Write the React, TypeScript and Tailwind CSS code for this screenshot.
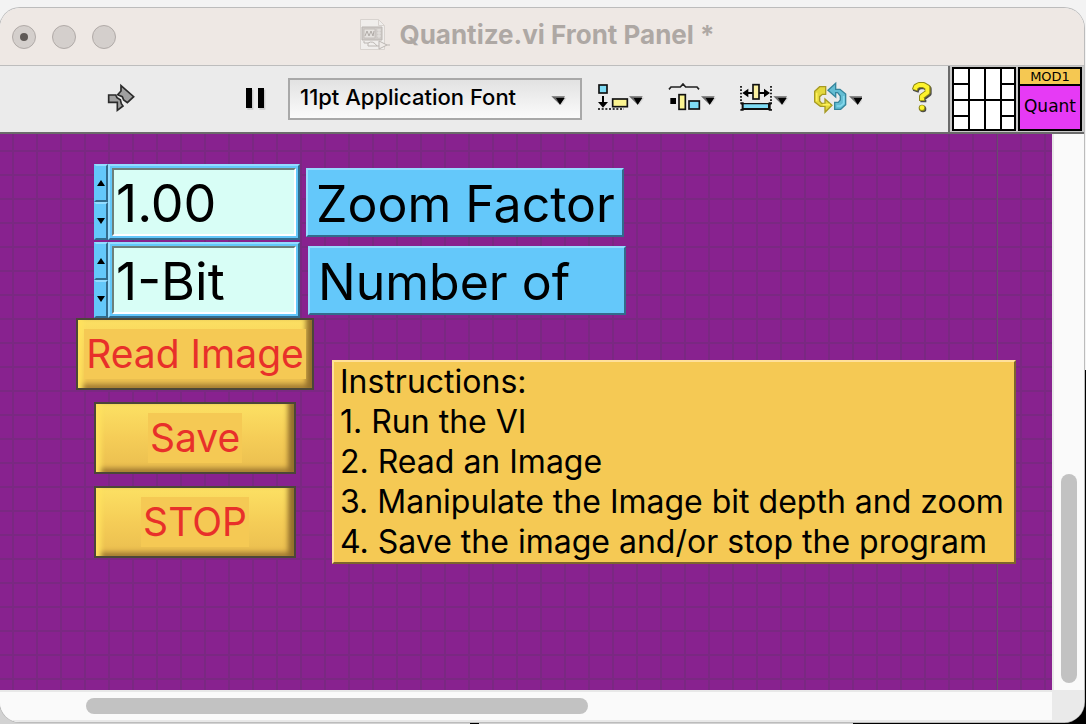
import type { ReactNode } from "react";

function DropArrow({ x, y }: { x: number; y: number }) {
  return (
    <g>
      <path d={`M${x + 6} ${y + 4}h40l-16 23z`} fill="#d6d6d6" />
      <path d={`M${x} ${y}h41l-15 25z`} fill="#6a6a6a" />
      <path d={`M${x + 14} ${y + 5}h26l-14 20z`} fill="#000" />
    </g>
  );
}

function ToolButton({ label, viewBox, children }: { label: string; viewBox: string; children: ReactNode }) {
  return (
    <button type="button" aria-label={label} className="shrink-0">
      <svg viewBox={viewBox} className="h-[38px] w-[50px]">
        {children}
      </svg>
    </button>
  );
}

function TitleBar() {
  return (
    <header className="relative flex h-[58px] shrink-0 items-center justify-center border-b border-[#bdbdbd] bg-[#eee8e4]">
      <div className="absolute left-3 flex gap-4">
        <button type="button" aria-label="Close" className="flex size-6 items-center justify-center rounded-full border border-[#b0aaa7] bg-[#d4cfcc]">
          <span className="size-2 rounded-full bg-[#5f5a57]" />
        </button>
        <button type="button" aria-label="Minimize" className="size-6 rounded-full border border-[#b0aaa7] bg-[#d4cfcc]" />
        <button type="button" aria-label="Zoom" className="size-6 rounded-full border border-[#b0aaa7] bg-[#d4cfcc]" />
      </div>
      <div className="flex items-center gap-2 pr-[10px] pb-1">
        <svg viewBox="0 0 32 34" className="h-[34px] w-8" fill="none" stroke="#c5c0bc">
          <path d="M1.500 1.500h18l6 6v24h-24z" fill="#f0eeec" stroke="#d8d3cf" />
          <path d="M19.500 1.500v6h6" stroke="#d8d3cf" />
          <path d="M3 9h20v13H3z" fill="#cfcbc8" stroke="#bbb6b2" />
          <path d="M5 11h11v9H5z" fill="#e5e2df" />
          <path d="M6 18l2-5 2 5 2-5 2 5 1-5" stroke="#b0aba7" />
          <path d="M18 12h4M18 15h4M18 18h4M20 11v9" stroke="#e5e2df" />
          <path d="M5 23v2h4v3h11M9 25q5-3 9 3" stroke="#bbb6b2" />
          <path d="M20 23l8 4-8 4z" fill="#efebe8" stroke="#bbb6b2" />
          <path d="M28 27h3" stroke="#bbb6b2" />
        </svg>
        <h1 className="text-[26px] leading-8 font-bold text-[#aea8a4]">Quantize.vi Front Panel *</h1>
      </div>
    </header>
  );
}

function Toolbar() {
  return (
    <div className="flex h-[68px] shrink-0 items-center border-b-2 border-[#6b6b6b] bg-[#ebebeb] pl-[104px]">
      <button type="button" aria-label="Run" className="mr-[107px] shrink-0">
        <svg viewBox="312 240 102 114" className="h-[38px] w-[34px]">
          <g fill="#a0a0a0" stroke="#2b2b2b" strokeWidth="5" strokeLinejoin="miter">
            <path d="M363 257v16l-10 11 14 6 4 10 11 8 19-18z" />
            <path d="M326 285h21l4 8 10 6 3 12 5 7-17 13v-24h-26z" />
          </g>
        </svg>
      </button>
      <button type="button" aria-label="Pause" className="mr-[22px] shrink-0">
        <svg viewBox="735 240 63 114" className="h-[38px] w-[21px]">
          <path d="M742 269h18v60h-18zM778 269h18v60h-18z" fill="#ccc" />
          <path d="M738 264h18v60h-18zM774 264h18v60h-18z" fill="#000" />
        </svg>
      </button>
      <div className="relative mr-[14px] w-[294px] shrink-0">
        <select
          aria-label="Text settings"
          className="block h-[42px] w-full appearance-none border-2 border-[#a8a8a8] bg-linear-to-b from-[#e2e2e2] to-[#fbfbfb] pr-10 pb-1 pl-[10px] text-[22px] leading-8 font-medium text-black"
        >
          <option>11pt Application Font</option>
        </select>
        <svg viewBox="810 284 54 36" className="pointer-events-none absolute top-[17px] right-[14px] h-3 w-[18px]">
          <DropArrow x={814} y={288} />
        </svg>
      </div>
      <div className="flex shrink-0 gap-[22px]">
        <ToolButton label="Align objects" viewBox="48 30 150 114">
          <rect x="57" y="45" width="24" height="24" fill="#7fdcf5" stroke="#111" strokeWidth="5" />
          <path d="M69 78v24" stroke="#000" strokeWidth="6" />
          <path d="M54 96h30l-15 17z" fill="#000" />
          <rect x="98" y="87" width="44" height="23" fill="#fbf491" stroke="#111" strokeWidth="5" />
          <path d="M54 117h78" stroke="#000" strokeWidth="5" strokeDasharray="6 5" />
          <DropArrow x={147} y={79} />
        </ToolButton>
        <ToolButton label="Distribute objects" viewBox="264 30 150 114">
          <path d="M267 58l6-7h28l8-9 8 9h34l6 7" fill="none" stroke="#222" strokeWidth="5" />
          <path d="M271 84h17v18h-17z" fill="#000" />
          <rect x="297" y="74" width="19" height="44" fill="#fbf491" stroke="#111" strokeWidth="5" />
          <rect x="327" y="93" width="31" height="24" fill="#7fdcf5" stroke="#111" strokeWidth="5" />
          <DropArrow x={363} y={79} />
        </ToolButton>
        <ToolButton label="Resize objects" viewBox="60 30 150 114">
          <path d="M63 48v46M153 48v46" stroke="#000" strokeWidth="5" strokeDasharray="5 5" />
          <path d="M75 69h68" stroke="#000" strokeWidth="6" />
          <path d="M67 69l18-13v26zM150 69l-18-13v26z" fill="#000" />
          <rect x="99" y="44" width="18" height="43" fill="#fbf0a0" stroke="#111" strokeWidth="5" />
          <path d="M61 97h10v2h75v-2h10v5l-4 2v12l4 2v4h-10v-2H71v2H61v-4l4-2v-12l-4-2z" fill="#111" />
          <path d="M71 103h73v11H71z" fill="#7fdcf5" />
          <DropArrow x={160} y={79} />
        </ToolButton>
        <ToolButton label="Reorder" viewBox="276 30 150 114">
          <path d="M317 50h-18l-15 14v32l17 13h14v18l21-21-21-19v13h-10l-6-7V80l8-7h10z" fill="#e3d83c" stroke="#a79a22" strokeWidth="4" />
          <path d="M344 118h18l15-14V72l-17-14h-13V40l-23 21 23 20V68h6l8 10v12l-6 7h-11z" fill="#63bdd3" stroke="#35859c" strokeWidth="4" />
          <path d="M290 68v26M308 104h22" stroke="#fff15a" strokeWidth="5" />
          <path d="M350 108h12l9-8V78" fill="none" stroke="#83d9ed" strokeWidth="5" />
          <DropArrow x={387} y={79} />
        </ToolButton>
      </div>
      <button type="button" aria-label="Help" className="ml-12 shrink-0">
        <svg viewBox="570 30 75 114" className="h-[38px] w-[25px]" fill="none" strokeLinejoin="round">
          <path d="M587 65l4-11 9-5h13l13 7v15l-16 12v14" stroke="#4a4a4a" strokeWidth="18" />
          <circle cx="609" cy="117" r="10" fill="#4a4a4a" />
          <path d="M584 61l4-11 9-5h13l13 7v15l-17 12v14" stroke="#8d8714" strokeWidth="18" />
          <circle cx="606" cy="114" r="10" fill="#8d8714" />
          <path d="M585 59l3-9 9-5h13l12 7v15l-16 12v12" stroke="#fdf32c" strokeWidth="12" />
          <circle cx="606" cy="113" r="7" fill="#fdf32c" />
        </svg>
      </button>
      <div className="mt-[2px] ml-auto flex h-[68px] shrink-0 gap-[2px] border-b-2 border-l-2 border-[#6b6b6b] bg-[#c9c9c9] pt-px pr-[2px] pl-[2px]">
        <svg viewBox="0 0 64 64" className="size-16" shapeRendering="crispEdges" aria-label="Connector pane">
          <path d="M1 1h62v62H1z" fill="#fff" stroke="#000" strokeWidth="2" />
          <path d="M17 1v62M33 1v62M49 1v62M1 33h62M1 17h16M1 49h16M49 17h14M49 49h14" stroke="#000" strokeWidth="2" />
        </svg>
        <div className="flex size-16 flex-col border-2 border-black text-center text-black">
          <div className="h-[17px] border-b-2 border-black bg-[#f5c852] font-['DejaVu_Sans'] text-[13px] leading-[15px]">MOD1</div>
          <div className="grow bg-[#e63af5] font-['DejaVu_Sans'] text-[17px] leading-[40px]">Quant</div>
        </div>
      </div>
    </div>
  );
}

function Spin({ label, d }: { label: string; d: string }) {
  return (
    <button
      type="button"
      aria-label={label}
      className="flex flex-1 items-center justify-center border-2 border-t-[#94dcff] border-r-[#326b8c] border-b-[#326b8c] border-l-[#64c8fa] bg-[#64c8fa]"
    >
      <svg viewBox="0 0 8 6" className="h-[6px] w-2">
        <path d={d} fill="#000" />
      </svg>
    </button>
  );
}

function Control({ id, label, value, offset }: { id: string; label: string; value: string; offset: string }) {
  return (
    <div className="flex items-center">
      <div className="flex h-[76px] w-[206px] shrink-0">
        <div className="flex w-[14px] flex-col">
          <Spin label={`Increase ${label}`} d="M4 0l4 6H0z" />
          <Spin label={`Decrease ${label}`} d="M0 0h8L4 6z" />
        </div>
        <div className="flex-1 border-2 border-t-[#94dcff] border-r-[#326b8c] border-b-[#326b8c] border-l-[#94dcff] bg-[#64c8fa] p-[2px]">
          <input
            id={id}
            defaultValue={value}
            className="block h-full w-full border-2 border-t-[#6c807b] border-r-white border-b-white border-l-[#6c807b] bg-[#d8fef6] pt-[3px] pl-[2px] text-[52px] leading-[60px] text-black outline-none"
          />
        </div>
      </div>
      <label
        htmlFor={id}
        className={`${offset} h-[69px] w-[318px] border-2 border-t-[#94dcff] border-r-[#326b8c] border-b-[#326b8c] border-l-[#94dcff] bg-[#64c8fa] pl-2 text-[50px] leading-[68px] whitespace-nowrap text-black`}
      >
        {label}
      </label>
    </div>
  );
}

function GoldButton({ children, width }: { children: ReactNode; width: string }) {
  return (
    <button
      type="button"
      className={`${width} flex h-[72px] items-center justify-center border-2 border-[#4c4638] bg-linear-to-b from-[#fce063] via-[#f5cd57] to-[#eabd4f] text-[#e8302a] shadow-[inset_9px_0_5px_-4px_#ffe25e,inset_-9px_0_5px_-3px_#94702d,inset_0_-7px_5px_-3px_#a67f34]`}
    >
      <span className="bg-[#f5c954] px-[2px] text-[39px] leading-[50px] whitespace-nowrap">{children}</span>
    </button>
  );
}

const steps = [
  "Run the VI",
  "Read an Image",
  "Manipulate the Image bit depth and zoom",
  "Save the image and/or stop the program",
];

function FrontPanel() {
  return (
    <main className="min-w-0 flex-1 overflow-hidden bg-[#88228f] bg-[linear-gradient(90deg,transparent_997px,#6b4a70_997px,#6b4a70_998px,transparent_998px),linear-gradient(90deg,transparent_12px,#7a2882_12px,#7a2882_14px,transparent_14px),linear-gradient(transparent_16px,#7a2882_16px,#7a2882_18px,transparent_18px)] bg-size-[100%_100%,24px_24px,24px_24px] pt-[30px]">
      <div className="flex flex-col gap-[2px] pl-[94px]">
        <Control id="zoom-factor" label="Zoom Factor" value="1.00" offset="ml-[6px]" />
        <Control id="bit-count" label="Number of" value="1-Bit" offset="ml-2" />
      </div>
      <div className="flex items-start gap-[18px] pl-[76px]">
        <div className="flex w-[238px] shrink-0 flex-col items-center gap-3">
          <GoldButton width="w-[238px]">Read Image</GoldButton>
          <GoldButton width="w-[202px]">Save</GoldButton>
          <GoldButton width="w-[202px]">STOP</GoldButton>
        </div>
        <section className="mt-[42px] w-[684px] shrink-0 border-2 border-t-[#ffe09a] border-r-[#7d642c] border-b-[#7d642c] border-l-[#ffe09a] bg-[#f5c954] pl-[6px] text-[32px] leading-10 whitespace-nowrap text-black">
          <h2>Instructions:</h2>
          <ol>
            {steps.map((step, i) => (
              <li key={step}>
                {i + 1}. {step}
              </li>
            ))}
          </ol>
        </section>
      </div>
    </main>
  );
}

export default function App() {
  return (
    <div className="flex min-h-screen flex-col bg-[linear-gradient(90deg,#d2d2d2_470px,#000_470px,#000_479px,#d2d2d2_479px,#d2d2d2_853px,#000_853px),linear-gradient(#f3f3f3_370px,#000_370px)] bg-size-[100%_20px,100%_100%] bg-bottom bg-no-repeat pt-2 pr-[2px] pb-[2px] font-[Inter,'Liberation_Sans',sans-serif]">
      <div className="flex flex-1 flex-col overflow-hidden rounded-[20px] bg-[#fafafa] shadow-[0_0_0_1px_#bcbcbc]">
        <TitleBar />
        <Toolbar />
        <div className="flex flex-1">
          <FrontPanel />
          <div className="flex w-8 shrink-0 flex-col items-center border-l-2 border-[#e8e8e8] bg-[#fafafa]">
            <div className="flex-[340]" />
            <div className="w-4 flex-[209] rounded-full bg-[#c2c2c2]" />
            <div className="flex-[7]" />
          </div>
        </div>
        <div className="flex h-8 shrink-0">
          <div className="flex flex-1 items-center border-y-2 border-[#e8e8e8] bg-[#fafafa]">
            <div className="flex-[86]" />
            <div className="h-4 flex-[502] rounded-full bg-[#c2c2c2]" />
            <div className="flex-[464]" />
          </div>
          <div className="w-8 bg-[#eaeaea]" />
        </div>
      </div>
    </div>
  );
}
